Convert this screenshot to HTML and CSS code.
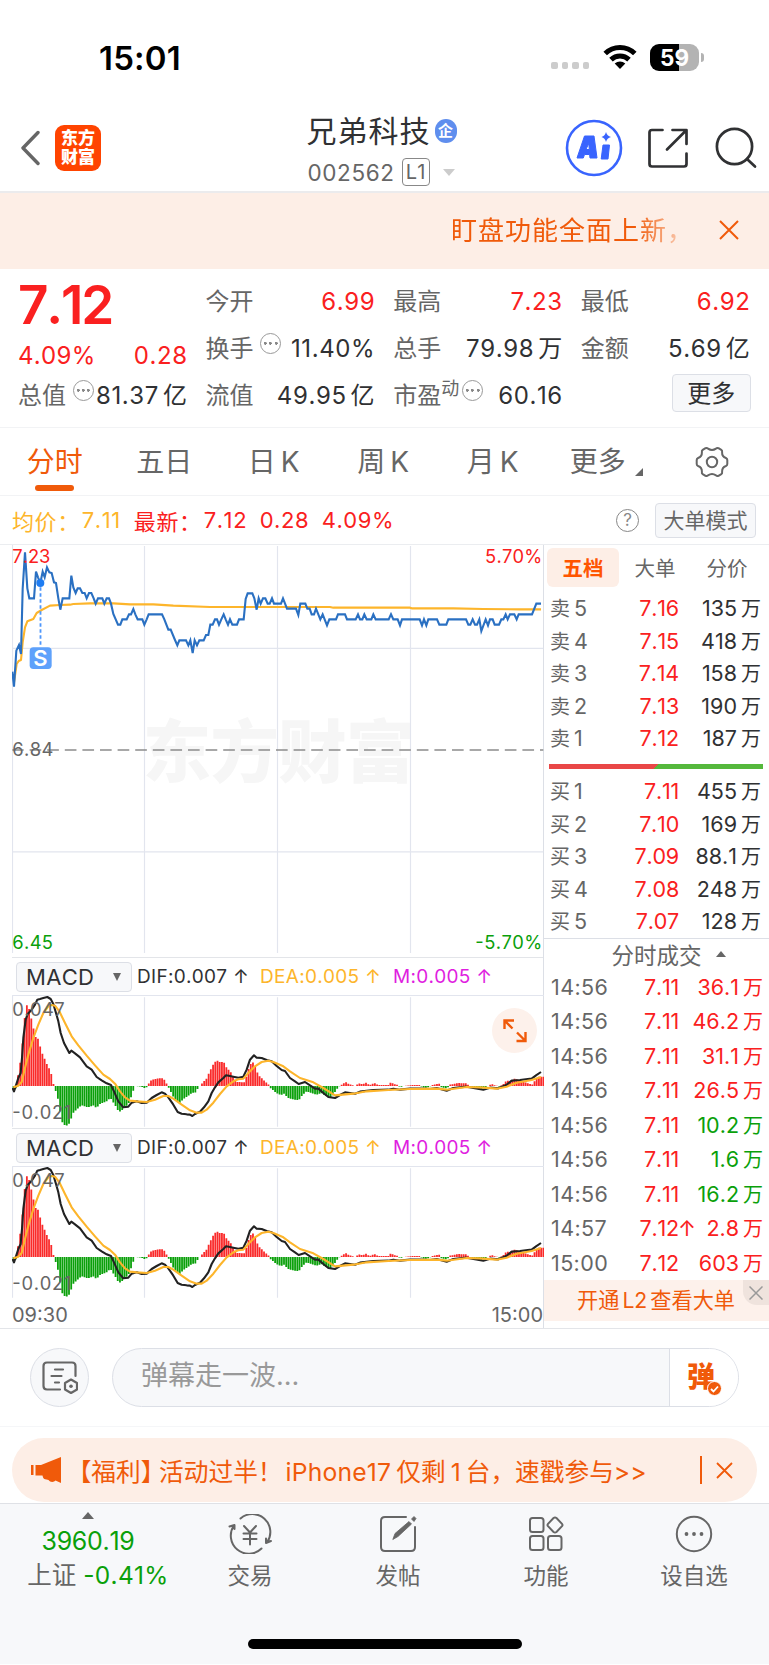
FILE: index.html
```html
<!DOCTYPE html>
<html lang="zh-CN">
  <head>
    <meta charset="UTF-8" />
    <meta name="viewport" content="width=device-width, initial-scale=1.0" />
    <title>兄弟科技 002562</title>
    <link rel="stylesheet" href="styles.css">
  </head>
  <body>
    <div class="status-bar">
      <div class="clock">15:01</div>
      <div class="status-icons">
        <div class="dots"><i></i><i></i><i></i><i></i></div>
        <svg class="wifi" width="34" height="26" viewBox="0 0 34 26">
          <g fill="none" stroke="#000" stroke-width="5">
            <path d="M2.2 9.6 A21 21 0 0 1 31.8 9.6" />
            <path d="M8 15.6 A13 13 0 0 1 26 15.6" />
          </g>
          <path d="M11.7 19.6 A8 8 0 0 1 22.3 19.6 L17 25 Z" />
        </svg>
        <div class="battery">59</div>
        <div class="battery-nub"></div>
      </div>
    </div>

    <div class="navbar">
      <svg class="back" width="20" height="36" viewBox="0 0 20 36">
        <path d="M18 2.5 L3 18 L18 33.5" fill="none" stroke="#666" stroke-width="3.4" stroke-linecap="round" stroke-linejoin="round" />
      </svg>
      <div class="logo">东方<br>财富</div>
      <div class="title">
        <div class="title-name">兄弟科技<span class="corp">企</span></div>
        <div class="title-code"><span>002562</span><span class="level">L1</span><i class="tri-down"></i></div>
      </div>
      <svg class="ai" width="58" height="58" viewBox="0 0 58 58">
        <circle cx="29" cy="29" r="27" fill="none" stroke="#3964fe" stroke-width="2.6" />
        <path d="M12 39 L19.5 17 H29 L32 39 H25 L24.6 35.5 H19.5 L18.3 39 Z M20.9 30.5 H24.3 L23.8 24.5 Z" fill="#3964fe" fill-rule="evenodd" stroke="#3964fe" stroke-linejoin="round" />
        <path d="M38 26 H44.5 L43 40 H36.2 Z" fill="#3964fe" stroke="#3964fe" stroke-linejoin="round" />
        <path d="M41 13 Q42 17 46 18 Q42 19 41 23 Q40 19 36.5 18 Q40 17 41 13 Z" fill="#3964fe" />
      </svg>
      <svg class="share" width="42" height="42" viewBox="0 0 42 42">
        <g fill="none" stroke="#303133" stroke-width="2.7" stroke-linecap="round" stroke-linejoin="round">
          <path d="M15.5 3 H5 Q2.5 3 2.5 5.5 V37 Q2.5 39.5 5 39.5 H37 Q39.5 39.5 39.5 37 V26.5" />
          <path d="M25.5 3 H39.5 V17 M39 3.5 L20 22.5" />
        </g>
      </svg>
      <svg class="search" width="42" height="42" viewBox="0 0 42 42">
        <g fill="none" stroke="#303133" stroke-width="2.7" stroke-linecap="round">
          <circle cx="19.5" cy="19.5" r="17.6" />
          <path d="M32 32 L40 39.5" />
        </g>
      </svg>
    </div>

    <div class="notice">
      <div class="notice-text">盯盘功能全面上新，</div>
      <svg width="20" height="20" viewBox="0 0 20 20"><path d="M1 1 L19 19 M19 1 L1 19" stroke="#f05a0a" stroke-width="2" /></svg>
    </div>

    <div class="quote">
      <div class="quote-col">
        <div class="big-price">7.12</div>
        <div class="cell cell-change"><span class="num pct red">4.09%</span><span class="num red">0.28</span></div>
        <div class="cell"><span class="label">总值</span><i class="more-dot"></i><span class="num">81.37<em>亿</em></span></div>
      </div>
      <div class="quote-col">
        <div class="cell"><span class="label">今开</span><span class="num red">6.99</span></div>
        <div class="cell"><span class="label">换手</span><i class="more-dot"></i><span class="num">11.40%</span></div>
        <div class="cell"><span class="label">流值</span><span class="num">49.95<em>亿</em></span></div>
      </div>
      <div class="quote-col">
        <div class="cell"><span class="label">最高</span><span class="num red">7.23</span></div>
        <div class="cell"><span class="label">总手</span><span class="num">79.98<em>万</em></span></div>
        <div class="cell"><span class="label">市盈<sup>动</sup></span><i class="more-dot pe"></i><span class="num">60.16</span></div>
      </div>
      <div class="quote-col">
        <div class="cell"><span class="label">最低</span><span class="num red">6.92</span></div>
        <div class="cell"><span class="label">金额</span><span class="num">5.69<em>亿</em></span></div>
        <div class="cell cell-btn"><span class="more-btn">更多</span></div>
      </div>
    </div>

    <div class="tabs">
      <div class="tab active">分时</div>
      <div class="tab">五日</div>
      <div class="tab">日<b>K</b></div>
      <div class="tab">周<b>K</b></div>
      <div class="tab">月<b>K</b></div>
      <div class="tab">更多<i class="corner"></i></div>
      <div class="tab tab-gear">
        <svg width="34" height="32" viewBox="0 0 34 32">
          <g fill="none" stroke="#666" stroke-width="2" stroke-linejoin="round">
            <path d="M10.5 2.2 Q12 1.6 13 2.7 Q17 5.4 21 2.7 Q22 1.6 23.5 2.2 L26.3 3.9 Q27.5 4.8 27.1 6.2 Q26.9 10.6 30.9 12 Q32.3 12.6 32.3 14 V18 Q32.3 19.4 30.9 20 Q26.9 21.4 27.1 25.8 Q27.5 27.2 26.3 28.1 L23.5 29.8 Q22 30.4 21 29.3 Q17 26.6 13 29.3 Q12 30.4 10.5 29.8 L7.7 28.1 Q6.5 27.2 6.9 25.8 Q7.1 21.4 3.1 20 Q1.7 19.4 1.7 18 V14 Q1.7 12.6 3.1 12 Q7.1 10.6 6.9 6.2 Q6.5 4.8 7.7 3.9 Z" />
            <circle cx="17" cy="16" r="5.2" />
          </g>
        </svg>
      </div>
    </div>

    <div class="legend">
      <span class="avg">均价：</span><span class="avg legend-avg">7.11</span>
      <span class="red">最新：</span><span class="red legend-last">7.12</span><span class="red legend-diff">0.28</span><span class="red">4.09%</span>
      <span class="help">?</span>
      <span class="mode-btn">大单模式</span>
    </div>

    <div class="market">
      <div class="charts">
        <!-- price chart, units are a third of a pixel -->
        <svg class="price-chart" width="532" height="412" viewBox="36 18 1596 1236">
          <text class="watermark" x="428" y="715" textLength="815">东方财富</text>
          <g class="grid">
            <path d="M433.5 21 V1242 M832.5 21 V1242 M1231.5 21 V1242" />
            <path d="M37 328 H1630 M37 938.5 H1630" />
          </g>
          <path class="frame" d="M37.5 18 V1242" />
          <path class="mid-line" d="M37 633 H1630" />
          <path class="avg-line" d="M42 430 L50 375 56 366 63 363 68 310 75 265 82 247 100 240 110 222 125 213 150 200 180 198 210 197 220 195 270 193 340 193 390 196 460 196 520 200 630 204 990 204 1000 206 1230 206 1235 208 1360 208 1450 210 1560 211 1623 211" />
          <path class="price-line" d="M37 398 L42 443 49 335 57 318 63 345 68 150 75 40 82 148 88 178 102 178 108 98 114 115 121 132 128 98 134 115 141 85 148 100 155 102 162 130 168 132 175 178 181 212 188 178 208 178 214 110 220 145 227 162 233 148 240 148 247 162 254 162 260 178 267 162 274 162 281 178 287 194 294 178 307 178 313 194 320 178 327 178 333 194 340 225 354 257 361 257 367 241 380 241 387 226 393 226 400 210 406 226 413 241 427 241 433 257 440 241 446 226 486 226 493 241 505 272 512 272 525 303 532 319 538 304 558 304 565 319 571 304 578 342 584 304 591 319 598 304 611 304 618 288 625 288 631 257 638 257 645 241 651 241 657 257 664 241 671 226 677 241 684 257 690 241 697 257 711 257 717 241 731 241 737 180 743 163 757 163 763 178 770 212 776 178 782 194 789 178 796 178 803 194 809 194 816 178 822 194 843 194 849 178 861 209 888 209 895 228 901 194 916 194 922 209 929 209 935 226 942 226 948 209 961 241 968 226 981 259 988 241 1008 241 1014 226 1035 226 1041 241 1067 241 1074 226 1080 241 1087 241 1093 226 1100 241 1114 241 1120 226 1127 241 1166 241 1173 226 1180 241 1193 241 1200 259 1206 241 1259 241 1266 259 1272 241 1279 259 1285 241 1311 241 1318 257 1339 257 1345 241 1398 241 1405 257 1411 257 1418 241 1425 257 1431 257 1438 241 1444 276 1457 241 1464 259 1470 241 1478 241 1484 257 1497 257 1504 241 1510 241 1517 226 1523 241 1530 226 1543 226 1550 241 1556 226 1596 226 1609 194 1623 194" />
          <path class="mark-line" d="M121.5 145 V325" />
          <circle cx="121" cy="132" r="12" fill="#1e7cf2" />
          <rect x="89" y="325" width="66" height="65" rx="11" fill="#5ea1fb" />
          <text class="mark-text" x="121.5" y="381">S</text>
          <text class="axis red" x="37" y="73" textLength="114">7.23</text>
          <text class="axis red" x="1455" y="73" textLength="172">5.70%</text>
          <text class="axis" x="37" y="651" textLength="123">6.84</text>
          <text class="axis green" x="37" y="1229" textLength="122">6.45</text>
          <text class="axis green" x="1426" y="1229" textLength="201">-5.70%</text>
        </svg>

        <div class="macd-head">
          <div class="select">MACD<i></i></div>
          <span class="dif">DIF:0.007 ↑</span><span class="dea">DEA:0.005 ↑</span><span class="m">M:0.005 ↑</span>
        </div>
        <div class="macd-plot">
          <svg class="macd" width="532" height="133" viewBox="36 121 1596 399"></svg>
          <div class="expand">
            <svg width="24" height="24" viewBox="0 0 24 24">
              <path d="M1.5 10 V1.5 H11 M2 2 L9.5 9.5 M22.5 13 V22 H13.5 M22 21.5 L14 13.5" fill="none" stroke="#f05a0a" stroke-width="2.4" />
            </svg>
          </div>
        </div>

        <div class="macd-head">
          <div class="select">MACD<i></i></div>
          <span class="dif">DIF:0.007 ↑</span><span class="dea">DEA:0.005 ↑</span><span class="m">M:0.005 ↑</span>
        </div>
        <div class="macd-plot">
          <svg class="macd" width="532" height="133" viewBox="36 121 1596 399"></svg>
        </div>

        <div class="times"><span>09:30</span><span>15:00</span></div>
      </div>

      <div class="book">
        <div class="book-tabs"><span class="on">五档</span><span>大单</span><span>分价</span></div>
        <div class="level-row"><span>卖<b>5</b></span><span class="price">7.16</span><span class="vol">135<em>万</em></span></div>
        <div class="level-row"><span>卖<b>4</b></span><span class="price">7.15</span><span class="vol">418<em>万</em></span></div>
        <div class="level-row"><span>卖<b>3</b></span><span class="price">7.14</span><span class="vol">158<em>万</em></span></div>
        <div class="level-row"><span>卖<b>2</b></span><span class="price">7.13</span><span class="vol">190<em>万</em></span></div>
        <div class="level-row"><span>卖<b>1</b></span><span class="price">7.12</span><span class="vol">187<em>万</em></span></div>
        <div class="ratio"></div>
        <div class="level-row"><span>买<b>1</b></span><span class="price">7.11</span><span class="vol">455<em>万</em></span></div>
        <div class="level-row"><span>买<b>2</b></span><span class="price">7.10</span><span class="vol">169<em>万</em></span></div>
        <div class="level-row"><span>买<b>3</b></span><span class="price">7.09</span><span class="vol">88.1<em>万</em></span></div>
        <div class="level-row"><span>买<b>4</b></span><span class="price">7.08</span><span class="vol">248<em>万</em></span></div>
        <div class="level-row"><span>买<b>5</b></span><span class="price">7.07</span><span class="vol">128<em>万</em></span></div>

        <div class="deals-title">分时成交<i></i></div>
        <div class="deal"><span>14:56</span><span class="price">7.11</span><span class="vol red">36.1<em>万</em></span></div>
        <div class="deal"><span>14:56</span><span class="price">7.11</span><span class="vol red">46.2<em>万</em></span></div>
        <div class="deal"><span>14:56</span><span class="price">7.11</span><span class="vol red">31.1<em>万</em></span></div>
        <div class="deal"><span>14:56</span><span class="price">7.11</span><span class="vol red">26.5<em>万</em></span></div>
        <div class="deal"><span>14:56</span><span class="price">7.11</span><span class="vol green">10.2<em>万</em></span></div>
        <div class="deal"><span>14:56</span><span class="price">7.11</span><span class="vol green">1.6<em>万</em></span></div>
        <div class="deal"><span>14:56</span><span class="price">7.11</span><span class="vol green">16.2<em>万</em></span></div>
        <div class="deal"><span>14:57</span><span class="price">7.12<u>↑</u></span><span class="vol red">2.8<em>万</em></span></div>
        <div class="deal"><span>15:00</span><span class="price">7.12</span><span class="vol red">603<em>万</em></span></div>
        <div class="l2">开通<b>L2</b>查看大单
          <div class="l2-close"><svg width="14" height="14" viewBox="0 0 14 14"><path d="M0.5 0.5 L13.5 13.5 M13.5 0.5 L0.5 13.5" stroke="#999" stroke-width="1.5" /></svg></div>
        </div>
      </div>
    </div>

    <div class="comment">
      <div class="comment-set">
        <svg width="36" height="34" viewBox="0 0 36 34">
          <g fill="none" stroke="#666" stroke-width="2.2" stroke-linecap="round">
            <path d="M18 28.5 H5 Q1.5 28.5 1.5 25 V5 Q1.5 1.5 5 1.5 H30 Q33.5 1.5 33.5 5 V15" />
            <path d="M13 8.5 H21 M9.5 15 H19.5 M13 21.5 H17" />
            <path d="M29 18.5 L35 22 V28.5 L29 32 L23 28.5 V22 Z" stroke-linejoin="round" />
          </g>
          <circle cx="29" cy="25.3" r="1.8" fill="#666" />
        </svg>
      </div>
      <div class="comment-box">
        <div class="comment-input">弹幕走一波...</div>
        <div class="danmu">弹<i><svg width="9" height="8" viewBox="0 0 9 8"><path d="M1 4 L3.5 6.5 L8 1.5" fill="none" stroke="#fff" stroke-width="1.8" /></svg></i></div>
      </div>
    </div>

    <div class="promo-wrap">
      <div class="promo">
        <svg width="31" height="26" viewBox="0 0 31 26">
          <path d="M0 8 H2.5 V18 H0 Z M4.5 8 H10 L30 0 V26 L24.5 23.5 C23 25.5 19 25.5 17.5 23 L15.5 22.5 C13.5 22.5 12 21.5 11.5 18.5 H4.5 Z" fill="#f05a0a" />
        </svg>
        <div class="promo-text"><span class="br-open">【</span>福利<span class="br-close">】</span>活动过半！<b class="phone">iPhone17</b>仅剩<b>1</b>台，速戳参与<b class="gt">&gt;&gt;</b></div>
        <div class="promo-line"></div>
        <svg width="17" height="17" viewBox="0 0 17 17"><path d="M1 1 L16 16 M16 1 L1 16" stroke="#f05a0a" stroke-width="1.8" /></svg>
      </div>
    </div>

    <div class="bottom">
      <div class="bottom-items">
        <div class="index">
          <i class="tri-up"></i>
          <div class="index-value">3960.19</div>
          <div class="index-change">上证 <span>-0.41%</span></div>
        </div>
        <div class="item">
          <svg width="44" height="40" viewBox="0 0 44 40">
            <g fill="none" stroke="#666" stroke-width="2" stroke-linecap="round" stroke-linejoin="round">
              <path d="M12.5 4.5 A18 18 0 0 1 39 28.5 M38 24.5 V29 L43 27" />
              <path d="M33.5 34.5 A18 18 0 0 1 6 11.5 M1.5 12.5 L6.5 11 V15" />
              <path d="M16 12 L22 18.5 L28 12 M22 18.5 V30.5 M15.5 19.5 H28.5 M15.5 25 H28.5" />
            </g>
          </svg>
          <span>交易</span>
        </div>
        <div class="item">
          <svg width="40" height="40" viewBox="0 0 40 40">
            <path d="M28 3 H7 Q3 3 3 7 V33 Q3 37 7 37 H33 Q37 37 37 33 V13" fill="none" stroke="#666" stroke-width="2" stroke-linecap="round" />
            <path d="M31 7.5 L33.5 10 L20 22.5 L14.8 25.5 L17 19.5 Z M33.5 5 L36 2.5 L38 4.5 L36 7.5 Z" fill="#666" stroke="#666" stroke-width="0.8" stroke-linejoin="round" />
          </svg>
          <span>发帖</span>
        </div>
        <div class="item">
          <svg width="40" height="40" viewBox="0 0 40 40">
            <g fill="none" stroke="#666" stroke-width="2">
              <rect x="4" y="4" width="13.5" height="14" rx="2.5" />
              <rect x="4" y="22" width="13.5" height="14" rx="2.5" />
              <rect x="22" y="22" width="13.5" height="14" rx="2.5" />
              <path d="M27.5 4 Q29 3 30.5 4 L36 9.8 Q37 11 36 12.2 L30.5 18 Q29 19 27.5 18 L22 12.2 Q21 11 22 9.8 Z" />
            </g>
          </svg>
          <span>功能</span>
        </div>
        <div class="item">
          <svg width="40" height="40" viewBox="0 0 40 40">
            <circle cx="20" cy="20" r="17.2" fill="none" stroke="#666" stroke-width="2" />
            <g fill="#666"><circle cx="12.5" cy="20" r="1.9" /><circle cx="20" cy="20" r="1.9" /><circle cx="27.5" cy="20" r="1.9" /></g>
          </svg>
          <span>设自选</span>
        </div>
      </div>
      <div class="home-bar"></div>
    </div>

    <script src="script.js"></script>
  </body>
</html>
```

FILE: styles.css
```css
body {
  width: 769px;
  margin: 0;
  background-color: #fff;
  color: #303133;
  font-family: Inter, "Noto Sans CJK SC", sans-serif;
  font-kerning: none;
  overflow-x: hidden;
}
i,
em {
  font-style: normal;
}
b {
  font-weight: inherit;
}
.red {
  color: #fa2020;
  fill: #fa2020;
}
.green {
  color: #0aa00a;
  fill: #0aa00a;
}

/* status bar */
.status-bar {
  height: 112px;
  display: flex;
  justify-content: space-between;
  box-sizing: border-box;
  padding: 37px 65px 0 99px;
}
.clock {
  font-size: 33px;
  line-height: 42px;
  font-weight: 600;
  color: #000;
  letter-spacing: 0.2px;
}
.status-icons {
  display: flex;
  align-items: center;
  height: 40px;
}
.dots {
  display: flex;
  gap: 4px;
  margin: 17px 14px 0 0;
}
.dots i {
  width: 6.5px;
  height: 6.5px;
  border-radius: 2px;
  background-color: #ccc;
}
.battery {
  width: 49px;
  height: 27px;
  margin-left: 13px;
  border-radius: 9px;
  background: linear-gradient(90deg, #000 59%, #b3b3b3 59%);
  color: #fff;
  font-size: 22.5px;
  line-height: 27px;
  font-weight: 700;
  text-align: center;
}
.battery-nub {
  width: 3px;
  height: 9px;
  margin-left: 2px;
  border-radius: 0 4px 4px 0;
  background-color: #b3b3b3;
}

/* navbar */
.navbar {
  display: flex;
  align-items: center;
  height: 79px;
  padding: 0 12px 0 20px;
  border-bottom: 2px solid #ebebed;
}
.navbar svg {
  flex: none;
  margin-top: -7px;
}
.logo {
  width: 46px;
  height: 46px;
  margin: -8px 0 0 15px;
  border-radius: 9px;
  background-color: #ff4400;
  color: #fff;
  font-size: 17px;
  line-height: 19px;
  font-weight: 900;
  text-align: center;
  box-sizing: border-box;
  padding-top: 4px;
}
.title {
  width: 150px;
  margin-left: 205.5px;
  align-self: flex-start;
}
.title-name {
  display: flex;
  align-items: center;
  height: 38px;
  font-size: 30px;
  line-height: 38px;
  letter-spacing: 1px;
  white-space: nowrap;
}
.corp {
  width: 24px;
  height: 24px;
  margin-left: 4px;
  border-radius: 12px;
  background-color: #5f8eee;
  color: #fff;
  font-size: 15px;
  line-height: 23px;
  font-weight: 700;
  letter-spacing: 0;
  text-align: center;
}
.title-code {
  display: flex;
  align-items: center;
  height: 30px;
  margin-top: 7px;
  padding-left: 1px;
  color: #666;
  font-size: 22.5px;
  letter-spacing: 0.6px;
}
.level {
  width: 26px;
  height: 26px;
  margin-left: 7px;
  border: 1.5px solid #888;
  border-radius: 4px;
  font-size: 20px;
  line-height: 26px;
  letter-spacing: 0;
  text-align: center;
}
.tri-down {
  margin-left: 13px;
  border: 6.5px solid transparent;
  border-top: 7px solid #ccc;
  border-bottom: 0;
}
.ai {
  margin-left: 108.5px;
}
.share {
  margin-left: 24px;
}
.search {
  margin-left: 26px;
}

/* notice */
.notice {
  display: flex;
  align-items: center;
  height: 76px;
  background-color: #fdeee6;
}
.notice-text {
  width: 246px;
  margin: 0 22px 0 451px;
  white-space: nowrap;
  color: #f05a0a;
  font-size: 26px;
  line-height: 38px;
  letter-spacing: 1px;
  -webkit-mask-image: linear-gradient(90deg, #000 75%, rgba(0, 0, 0, 0.3) 92%);
  mask-image: linear-gradient(90deg, #000 75%, rgba(0, 0, 0, 0.3) 92%);
}
.notice svg {
  margin-top: -2px;
}

/* quote */
.quote {
  display: grid;
  grid-template-columns: 169px 169px 169px 169px;
  column-gap: 18.6px;
  height: 159px;
  padding-left: 18px;
  box-sizing: border-box;
  border-bottom: 1.5px solid #f2f3f5;
}
.quote-col {
  padding-top: 9px;
}
.big-price {
  height: 54px;
  color: #fa2020;
  font-size: 53px;
  line-height: 54px;
  font-weight: 600;
  letter-spacing: -2.2px;
}
.cell {
  display: flex;
  height: 47px;
  font-size: 24px;
  line-height: 47px;
  white-space: nowrap;
}
.cell-change {
  height: 40px;
  line-height: 48px;
}
.label {
  color: #666;
}
.num {
  margin-left: auto;
  margin-right: -0.6px;
  letter-spacing: 0.6px;
}
.num.pct {
  margin-left: 0;
  letter-spacing: 0.3px;
}
.num em {
  margin-left: 4px;
}
.label sup {
  font-size: 18px;
  line-height: 10px;
  vertical-align: 9px;
}
.more-dot {
  flex: none;
  width: 19px;
  height: 19px;
  margin: 7.5px -10px 0 6.5px;
  border: 1.5px solid #999;
  border-radius: 50%;
  background: radial-gradient(circle, #888 1.3px, transparent 1.6px) center / 4.5px 4.5px no-repeat,
    radial-gradient(circle, #888 1.3px, transparent 1.6px) 2px center / 4.5px 4.5px no-repeat,
    radial-gradient(circle, #888 1.3px, transparent 1.6px) 12.5px center / 4.5px 4.5px no-repeat;
}
.more-dot.pe {
  margin-left: 3px;
}
.more-btn {
  width: 77px;
  height: 36px;
  margin: 2px -1px 0 auto;
  border: 1.5px solid #dcdfe6;
  border-radius: 4px;
  background-color: #f7f8fa;
  line-height: 37px;
  text-align: center;
}

/* period tabs */
.tabs {
  display: flex;
  height: 67px;
  border-bottom: 1.5px solid #f2f3f5;
}
.tab {
  position: relative;
  width: 109.5px;
  color: #666;
  font-size: 28px;
  line-height: 69px;
  text-align: center;
}
.tab b {
  margin-left: 5px;
}
.tab.active {
  color: #f05a0a;
}
.tab.active::after {
  content: "";
  position: absolute;
  left: 35px;
  bottom: 4.5px;
  width: 39px;
  height: 6px;
  border-radius: 3px;
  background-color: #f05a0a;
}
.corner {
  display: inline-block;
  margin: 0 -8px 0 9px;
  border-left: 8px solid transparent;
  border-bottom: 8px solid #666;
  vertical-align: -4px;
}
.tab-gear svg {
  margin-top: -4px;
  vertical-align: middle;
}

/* legend over the chart */
.legend {
  display: flex;
  align-items: center;
  height: 48px;
  padding: 0 13px 0 12px;
  border-bottom: 1.5px solid #ebedf0;
  font-size: 22px;
  letter-spacing: 0.6px;
  white-space: nowrap;
}
.avg {
  color: #fdb52b;
}
.legend-avg {
  width: 52px;
  margin-left: 2px;
}
.legend-last {
  width: 56px;
  margin-left: 2px;
}
.legend-diff {
  width: 62px;
}
.help {
  width: 21px;
  height: 21px;
  margin-left: auto;
  border: 1.5px solid #888;
  border-radius: 50%;
  color: #888;
  font-size: 17px;
  line-height: 21px;
  letter-spacing: 0;
  text-align: center;
}
.mode-btn {
  width: 99px;
  height: 33px;
  margin-left: 16px;
  border: 1.5px solid #dcdfe6;
  border-radius: 4px;
  background-color: #f7f8fa;
  color: #666;
  font-size: 21px;
  line-height: 33px;
  letter-spacing: 0;
  text-align: center;
}

/* charts */
.market {
  display: flex;
  border-bottom: 1.5px solid #e3e5e9;
}
.charts {
  width: 531px;
  padding-left: 12px;
  border-right: 1px solid #dcdfe6;
}
.price-chart {
  display: block;
}
.grid path,
.frame {
  fill: none;
  stroke: #e2e5ee;
  stroke-width: 3.5;
}
.watermark {
  fill: #f6f6f6;
  font-size: 205px;
  font-weight: 900;
}
.mid-line {
  fill: none;
  stroke: #8c8c8c;
  stroke-width: 5;
  stroke-dasharray: 35 17.8;
  stroke-dashoffset: 1;
}
.avg-line,
.dea-line {
  fill: none;
  stroke: #fdb52b;
  stroke-width: 6.3;
  stroke-linejoin: round;
}
.price-line {
  fill: none;
  stroke: #2a70c2;
  stroke-width: 6.3;
}
.dif-line {
  fill: none;
  stroke: #222;
  stroke-width: 6.3;
  stroke-linejoin: round;
}
.mark-line {
  fill: none;
  stroke: #4d96fb;
  stroke-width: 5.5;
  stroke-dasharray: 10 8;
}
.mark-text {
  fill: #fff;
  font-size: 66px;
  font-weight: 600;
  text-anchor: middle;
}
.axis {
  font-size: 55px;
}
.axis:not(.red):not(.green) {
  fill: #666;
}
.macd-head {
  display: flex;
  align-items: center;
  height: 38px;
  border-top: 1.5px solid #e3e5e9;
  box-sizing: border-box;
  padding-left: 4px;
  font-size: 19px;
  letter-spacing: 0.3px;
  white-space: nowrap;
}
.select {
  display: flex;
  align-items: center;
  width: 95px;
  height: 28px;
  padding: 0 10px 0 9px;
  border: 1.5px solid #dcdfe6;
  border-radius: 4px;
  background-color: #f7f8fa;
  font-size: 22px;
}
.select i {
  margin-left: auto;
  border: 4.5px solid transparent;
  border-top: 8px solid #666;
  border-bottom: 0;
}
.dif {
  width: 123px;
  margin-left: 5px;
}
.dea {
  width: 133px;
  color: #fdb52b;
}
.m {
  color: #e01ee0;
}
.macd-plot {
  position: relative;
  height: 133px;
}
.macd {
  display: block;
}
.expand {
  position: absolute;
  right: 6px;
  top: 13px;
  display: flex;
  align-items: center;
  justify-content: center;
  width: 45px;
  height: 45px;
  border-radius: 50%;
  background-color: #fdf1eb;
}
.times {
  display: flex;
  justify-content: space-between;
  height: 29px;
  color: #666;
  font-size: 20px;
  line-height: 33px;
}

/* order book */
.book {
  width: 225px;
  font-size: 21.5px;
}
.book-tabs {
  display: flex;
  height: 39px;
  margin: 3px 0 5px 3px;
  color: #666;
  font-size: 20.5px;
  line-height: 41px;
  text-align: center;
}
.book-tabs span {
  width: 72px;
}
.book-tabs .on {
  border-radius: 6px;
  background-color: #fdeee6;
  color: #ff5500;
  font-weight: 700;
}
.level-row,
.deal {
  display: flex;
  height: 32.5px;
  padding: 0 8px 0 6px;
  color: #666;
  line-height: 33.5px;
  white-space: nowrap;
}
.level-row span:first-child,
.deal span:first-child {
  width: 66px;
}
.level-row span:first-child {
  font-size: 20px;
}
.level-row b {
  margin-left: 4px;
  font-size: 21.5px;
}
.price {
  position: relative;
  width: 63px;
  color: #fa2020;
  text-align: right;
  letter-spacing: -0.2px;
}
.price u {
  position: absolute;
  left: 62px;
  top: 0;
  text-decoration: none;
}
.vol {
  flex: 1;
  text-align: right;
  color: #303133;
}
.vol em {
  margin-left: 4px;
  font-size: 20px;
}
.vol.red {
  color: #fa2020;
}
.vol.green {
  color: #0aa00a;
}
.ratio {
  height: 5px;
  margin: 9.5px 6px 6px 5px;
  background: linear-gradient(135deg, #e94747 50%, #55b83c 50%);
}
.deals-title {
  display: flex;
  align-items: center;
  justify-content: center;
  height: 31px;
  padding-left: 24px;
  border-top: 1.5px solid #dcdfe6;
  color: #666;
  font-size: 22.5px;
}
.deals-title i {
  margin-left: 14px;
  border: 5.5px solid transparent;
  border-bottom: 6.5px solid #666;
  border-top: 0;
}
.deal {
  height: 34.5px;
  padding: 0 6px 0 7px;
  line-height: 35.5px;
}
.deal span:first-child {
  width: 65px;
  letter-spacing: 0.4px;
}
.l2 {
  position: relative;
  height: 41px;
  padding-left: 33px;
  background-color: #fdf1eb;
  color: #f05a0a;
  font-size: 21.2px;
  line-height: 40px;
}
.l2 b {
  margin: 0 3px;
}
.l2-close {
  position: absolute;
  right: 0;
  top: 0;
  display: flex;
  align-items: center;
  justify-content: center;
  width: 26px;
  height: 25px;
  border-radius: 0 0 0 14px;
  background-color: #efe3dd;
}

/* comment bar */
.comment {
  display: flex;
  align-items: center;
  justify-content: space-between;
  height: 97px;
  padding: 0 30px;
  border-bottom: 1.5px solid #f5f6f8;
}
.comment-set,
.comment-box {
  display: flex;
  height: 57px;
  border: 1.5px solid #dcdfe6;
  background-color: #f7f8fa;
}
.comment-set {
  align-items: center;
  justify-content: center;
  width: 57px;
  border-radius: 50%;
}
.comment-box {
  width: 625px;
  border-radius: 30px;
  overflow: hidden;
}
.comment-input {
  flex: 1;
  padding-left: 28px;
  color: #999;
  font-size: 27px;
  line-height: 53px;
}
.danmu {
  position: relative;
  width: 51px;
  padding-left: 17px;
  border-left: 1.5px solid #dcdfe6;
  background-color: #fff;
  color: #f05a0a;
  font-size: 28px;
  line-height: 57px;
  font-weight: 900;
}
.danmu i {
  position: absolute;
  left: 37px;
  top: 32px;
  display: flex;
  align-items: center;
  justify-content: center;
  width: 13px;
  height: 13px;
  border: 1px solid #fff;
  border-radius: 50%;
  background-color: #f05a0a;
}

/* promo */
.promo-wrap {
  padding: 11px 12px 1px;
}
.promo {
  display: flex;
  align-items: center;
  height: 64px;
  padding-left: 19px;
  border-radius: 32px;
  background-color: #fdeee6;
}
.promo-text {
  width: 633px;
  margin: -1px 0 0 5px;
  color: #f05a0a;
  font-size: 24.7px;
  white-space: nowrap;
}
.br-open,
.br-close {
  font-feature-settings: "halt";
}
.br-open {
  margin-left: 12px;
}
.br-close {
  margin-right: 6px;
}
.promo-text b {
  margin: 0 5px;
}
.promo-text .phone {
  margin-left: 3px;
  letter-spacing: 0.2px;
}
.promo-text .gt {
  margin-left: 0;
}
.promo-line {
  width: 1.5px;
  height: 28px;
  margin-right: 14px;
  background-color: #f05a0a;
}

/* bottom bar */
.bottom {
  height: 160px;
  border-top: 1.5px solid #dfe1e6;
  background-color: #f7f8fa;
}
.bottom-items {
  display: flex;
  height: 135px;
  color: #666;
}
.index {
  display: flex;
  flex-direction: column;
  align-items: center;
  width: 176px;
  padding: 8px 0 0;
  box-sizing: border-box;
}
.tri-up {
  border: 6.5px solid transparent;
  border-bottom: 7px solid #666;
  border-top: 0;
}
.index-value {
  height: 38px;
  color: #0aa00a;
  font-size: 25px;
  line-height: 44px;
  letter-spacing: -0.3px;
}
.index-change {
  padding-left: 20px;
  font-size: 24.5px;
  line-height: 36px;
  white-space: nowrap;
}
.index-change span {
  color: #0aa00a;
  letter-spacing: 0.3px;
}
.item {
  display: flex;
  flex-direction: column;
  align-items: center;
  width: 148px;
  padding-top: 10px;
  font-size: 22.5px;
  line-height: 43px;
}
.home-bar {
  width: 274px;
  height: 10px;
  margin: 0 auto;
  border-radius: 5px;
  background-color: #000;
}
```

FILE: script.js
```js
// MACD data as [x, y] pairs, zero axis at y = 394
const ZERO = 394;
const STEP = 6.65;

const dif = "38,400 42,410 47,395 55,370 62,355 66,310 70,250 77,195 83,178 95,165 105,150 112,135 120,133 130,130 142,127 152,133 160,148 168,175 175,200 182,235 192,265 208,295 214,288 225,296 240,308 260,335 275,345 290,367 305,377 320,386 333,391 342,410 355,440 370,458 385,456 395,444 410,440 425,445 440,444 455,430 470,421 485,413 495,417 505,428 520,450 533,472 545,477 560,479 570,480 577,484 585,478 600,471 612,458 625,440 635,415 645,398 655,383 670,370 678,362 690,364 700,366 715,369 730,366 740,345 750,315 762,302 770,309 785,310 800,316 815,320 830,334 845,346 855,349 870,370 885,380 896,388 915,382 930,392 945,402 955,402 970,415 985,427 1005,430 1020,421 1035,413 1065,417 1080,411 1120,406 1165,405 1180,402 1200,405 1230,402 1260,402 1290,403 1310,400 1340,408 1360,400 1400,396 1420,400 1450,405 1470,399 1495,401 1520,390 1535,378 1560,376 1595,372 1608,362 1623,352";
const dea = "40,398 55,393 65,382 75,340 85,300 100,250 115,210 130,175 145,155 155,151 165,153 178,170 195,205 215,245 235,272 260,303 285,332 310,360 330,373 345,387 360,410 375,428 390,438 410,440 440,442 465,435 490,424 505,424 520,432 545,450 570,467 590,474 605,474 620,465 640,444 660,418 680,395 700,380 715,374 730,372 745,355 765,335 785,322 805,318 820,322 850,335 870,350 900,370 940,383 970,400 1005,422 1060,417 1100,410 1165,406 1230,403 1310,402 1340,405 1400,397 1440,398 1490,402 1520,396 1550,384 1595,376 1623,367";
const hist = "38,400 46,416 50,385 58,345 65,300 72,220 78,150 86,155 93,185 100,215 106,248 112,245 118,262 125,292 132,305 138,322 145,335 152,350 158,370 162,394 168,410 174,430 181,470 188,505 195,512 205,513 213,495 220,475 230,465 245,452 265,458 280,452 290,460 300,448 320,440 332,430 345,450 355,468 363,472 370,462 385,450 395,425 405,394 425,396 438,402 446,388 455,376 475,371 490,371 497,380 503,392 510,405 520,425 530,440 540,444 555,430 570,420 578,413 584,418 590,408 598,396 605,388 620,372 630,350 640,330 650,316 660,322 672,322 680,338 695,355 702,370 712,382 735,383 742,358 750,330 762,322 768,340 775,360 790,375 805,388 812,400 830,415 845,422 850,415 865,430 880,434 897,437 905,425 920,410 935,415 950,420 965,415 980,425 995,428 1010,405 1020,393 1030,388 1037,382 1047,388 1065,394 1078,386 1090,389 1097,383 1105,389 1115,391 1122,384 1135,391 1165,391 1173,383 1180,387 1195,391 1200,398 1210,394 1240,391 1260,391 1268,398 1280,399 1290,396 1300,390 1318,387 1325,398 1342,402 1350,390 1375,385 1400,386 1410,395 1445,404 1460,397 1475,388 1485,392 1500,396 1515,385 1520,376 1530,382 1545,372 1560,377 1585,386 1597,390 1605,378 1615,366 1632,366";

function points(str) {
  return str.split(" ").map((p) => p.split(",").map(Number));
}

function valueAt(list, x) {
  for (let i = 1; i < list.length; i++) {
    const [x0, y0] = list[i - 1];
    const [x1, y1] = list[i];
    if (x <= x1) return y0 + ((y1 - y0) * (x - x0)) / (x1 - x0);
  }
  return list[list.length - 1][1];
}

// one path per colour, every bar is a closed rectangle
function bars() {
  const list = points(hist);
  let up = "";
  let down = "";
  for (let x = 38; x < 1628; x += STEP) {
    const y = valueAt(list, x + STEP / 2);
    const bar = `M${x.toFixed(1)} ${ZERO}V${y.toFixed(1)}h5.4V${ZERO}Z`;
    if (y < ZERO) up += bar;
    else down += bar;
  }
  return `<path d="${up}" fill="#fa2a2a" /><path d="${down}" fill="#0aa00a" />`;
}

document.querySelectorAll(".macd").forEach((svg) => {
  svg.innerHTML = `
    <g class="grid">
      <path d="M433.5 128 V516 M832.5 128 V516 M1231.5 128 V516" />
      <path d="M37 122.5 H1632" />
    </g>
    <path class="frame" d="M37.5 122 V516" />
    ${bars()}
    <path class="dif-line" d="M${dif}" />
    <path class="dea-line" d="M${dea}" />
    <text class="axis" x="37" y="184" textLength="157">0.047</text>
    <text class="axis" x="37" y="494" textLength="177">-0.021</text>`;
});
```
